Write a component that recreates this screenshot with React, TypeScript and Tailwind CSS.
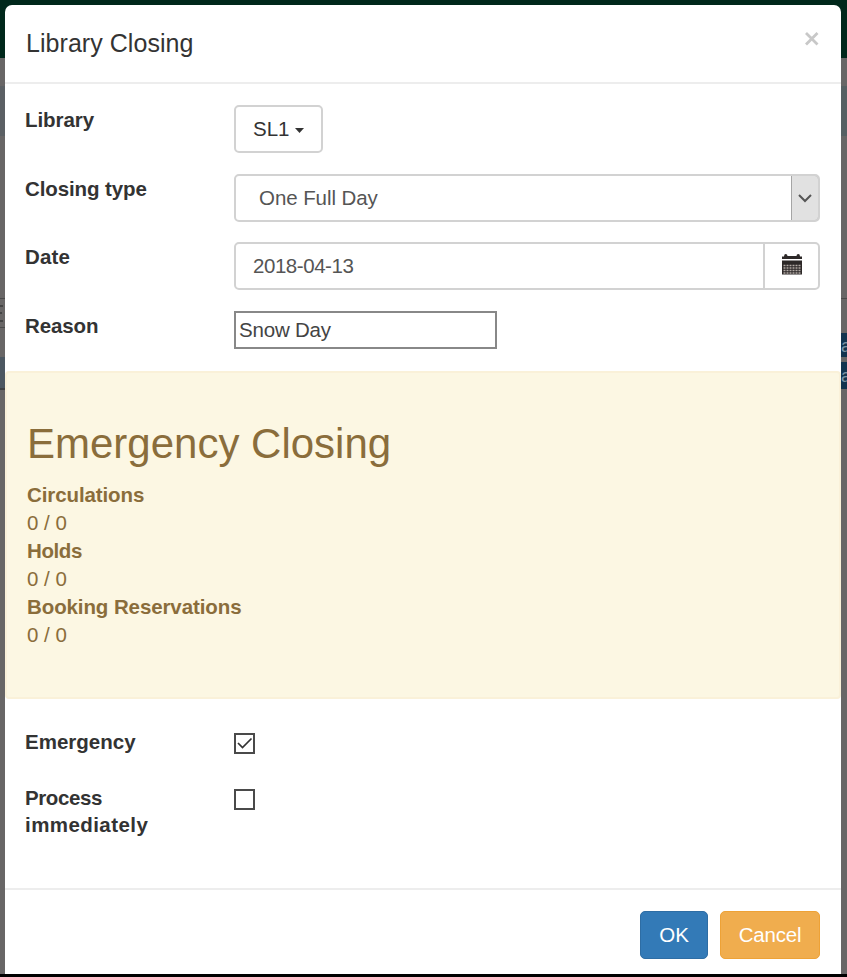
import type { ReactNode } from "react";

function Row({ label, children, className }: { label: ReactNode; children: ReactNode; className: string }) {
  return (
    <div className={`flex items-start ${className}`}>
      <div className="w-[209px] shrink-0 pt-px font-bold text-[#333]">{label}</div>
      {children}
    </div>
  );
}

function LeftEdge() {
  return (
    <div className="flex w-[5px] shrink-0 flex-col overflow-hidden bg-[#686666]">
      <div className="h-[58px] shrink-0 bg-[#00281b]" />
      <div className="h-[28px] shrink-0" />
      <div className="h-[50px] shrink-0 bg-[#5b6064]" />
      <div className="h-[162px] shrink-0" />
      <div className="h-px shrink-0 bg-[#4a4a4a]" />
      <div className="flex h-[28px] shrink-0 flex-col justify-evenly">
        <div className="h-[2px] w-[3px] bg-[#444]" />
        <div className="h-[2px] w-[2px] bg-[#444]" />
        <div className="h-[2px] w-[3px] bg-[#444]" />
      </div>
      <div className="h-px shrink-0 bg-[#4a4a4a]" />
      <div className="h-[29px] shrink-0" />
      <div className="h-[31px] shrink-0 bg-[#4c5761]" />
      <div className="h-[2px] shrink-0 bg-[#3f4144]" />
    </div>
  );
}

function RightEdge() {
  return (
    <div className="flex w-[6px] shrink-0 flex-col overflow-hidden bg-[#686666]">
      <div className="h-[58px] shrink-0 bg-[#00281b]" />
      <div className="h-[28px] shrink-0" />
      <div className="h-[50px] shrink-0 bg-[#566063]" />
      <div className="h-[162px] shrink-0" />
      <div className="h-px shrink-0 bg-[#4a4a4a]" />
      <div className="h-[34px] shrink-0" />
      <div className="h-[24px] shrink-0 overflow-hidden bg-[#12344f] text-[18px] leading-[26px] text-[#7b93a5]">a</div>
      <div className="h-[5px] shrink-0" />
      <div className="h-[27px] shrink-0 overflow-hidden bg-[#12344f] text-[18px] leading-[28px] text-[#7b93a5]">a</div>
    </div>
  );
}

export default function App() {
  return (
    <div className="flex h-[977px] w-[847px] flex-col overflow-hidden bg-black font-['Liberation_Sans',Arial,sans-serif] text-[20.5px] leading-[28px] text-[#333]">
      <div className="flex h-[974px] shrink-0 bg-[linear-gradient(#00281b_58px,#686666_58px)]">
        <LeftEdge />
        <div className="mt-[5px] flex h-[969px] w-[836px] shrink-0 flex-col rounded-t-[7px] bg-white">
          <header className="flex h-[79px] shrink-0 items-start justify-between border-b-2 border-[#ededed] pr-[21px] pl-[21px]">
            <h4 className="pt-[20px] text-[25px] leading-[36px] tracking-[0.05px]">Library Closing</h4>
            <button className="flex pt-[27px]" aria-label="Close">
              <svg width="17" height="14" viewBox="0 0 17 14" className="text-[#c8c8c8]">
                <path d="M3 1 14.500 12.500M14.500 1 3 12.500" stroke="currentColor" strokeWidth="2.800" fill="none" />
              </svg>
            </button>
          </header>

          <section className="flex h-[287px] shrink-0 flex-col pt-[21px] pr-[21px] pl-5">
            <Row label={<span className="tracking-[-0.05px]">Library</span>} className="h-[69px]">
              <button className="flex h-[48px] w-[89px] items-center rounded-[5px] border-2 border-[#d2d2d2] pl-[17px]">
                SL1
                <svg width="9" height="5" viewBox="0 0 9 5" className="mt-[2px] ml-[6px]">
                  <path d="M0 0h9L4.500 5z" fill="#333" />
                </svg>
              </button>
            </Row>
            <Row label={<span className="tracking-[-0.1px]">Closing type</span>} className="h-[69px]">
              <div className="flex h-[48px] flex-1 overflow-hidden rounded-[5px] border-2 border-[#d2d2d2] text-[#555]">
                <span className="flex-1 pt-[8px] pl-[23px] tracking-[-0.07px]">One Full Day</span>
                <span className="-my-px -mr-px flex w-[28px] items-center justify-center rounded-r-[4px] border border-[#a5a5a5] bg-[#e1e1e1]">
                  <svg width="14" height="9" viewBox="0 0 14 9" className="mt-[2px]">
                    <path d="m1 1 6 6 6-6" fill="none" stroke="#555" strokeWidth="2" />
                  </svg>
                </span>
              </div>
            </Row>
            <Row label={<span className="tracking-[0.15px]">Date</span>} className="h-[69px]">
              <div className="flex h-[48px] flex-1 rounded-[5px] border-2 border-[#d2d2d2] text-[#555]">
                <span className="flex-1 pt-[8px] pl-[17px] tracking-[-0.45px]">2018-04-13</span>
                <span className="flex w-[55px] justify-center border-l-2 border-[#d2d2d2] pt-[10px]">
                  <svg width="20" height="21" viewBox="0 0 20 21">
                    <path d="M0 2.500h2Q2 0 3.700 0T5.500 2h9Q14.500 0 16.300 0T18 2.500h2V5H0zM0 6.500h20v14H0z" fill="#2d2928" />
                    <path d="M1.500 11.500h17M1.500 14h17M1.500 16.500h17M1.500 19h17" stroke="#b2aaa5" strokeWidth="1.500" strokeDasharray="2 1" />
                  </svg>
                </span>
              </div>
            </Row>
            <Row label={<span className="tracking-[-0.1px]">Reason</span>} className="h-[60px]">
              <input
                className="h-[38px] w-[263px] border-2 border-[#888] bg-white pl-[3px] text-[#444] tracking-[-0.2px] outline-none"
                defaultValue="Snow Day"
              />
            </Row>
          </section>

          <section className="h-[328px] shrink-0 rounded-[4px] border-2 border-[#faf1d9] bg-[#fcf7e3] pt-[47px] pl-5 text-[#8a6d3b]">
            <h1 className="mb-[13px] text-[42px] leading-[48px]">Emergency Closing</h1>
            <div className="font-bold tracking-[-0.1px]">Circulations</div>
            <div>0 / 0</div>
            <div className="font-bold tracking-[-0.4px]">Holds</div>
            <div>0 / 0</div>
            <div className="font-bold tracking-[-0.1px]">Booking Reservations</div>
            <div>0 / 0</div>
          </section>

          <section className="h-[189px] shrink-0 px-5 pt-[28px]">
            <Row label="Emergency" className="h-[56px]">
              <span className="mt-[6px] flex h-[21px] w-[21px] items-center justify-center border-2 border-[#4a4a4a]">
                <svg width="17" height="17" viewBox="0 0 17 17">
                  <path d="m2 8 4.500 4.500L15.500 3.500" fill="none" stroke="#333" strokeWidth="1.700" />
                </svg>
              </span>
            </Row>
            <Row
              label={
                <>
                  <span className="tracking-[-0.4px]">Process</span>
                  <br />
                  <span className="tracking-[0.43px]">immediately</span>
                </>
              }
              className="leading-[27px]"
            >
              <span className="mt-[6px] h-[21px] w-[21px] border-2 border-[#4a4a4a]" />
            </Row>
          </section>

          <footer className="flex flex-1 items-start justify-end gap-[12px] border-t-2 border-[#ededed] pt-[21px] pr-[21px] text-white">
            <button className="h-[48px] w-[68px] rounded-[5px] border border-[#2e6da4] bg-[#337ab7]">OK</button>
            <button className="h-[48px] w-[100px] rounded-[5px] border border-[#eea236] bg-[#f0ad4e] tracking-[-0.2px]">Cancel</button>
          </footer>
        </div>
        <RightEdge />
      </div>
    </div>
  );
}
